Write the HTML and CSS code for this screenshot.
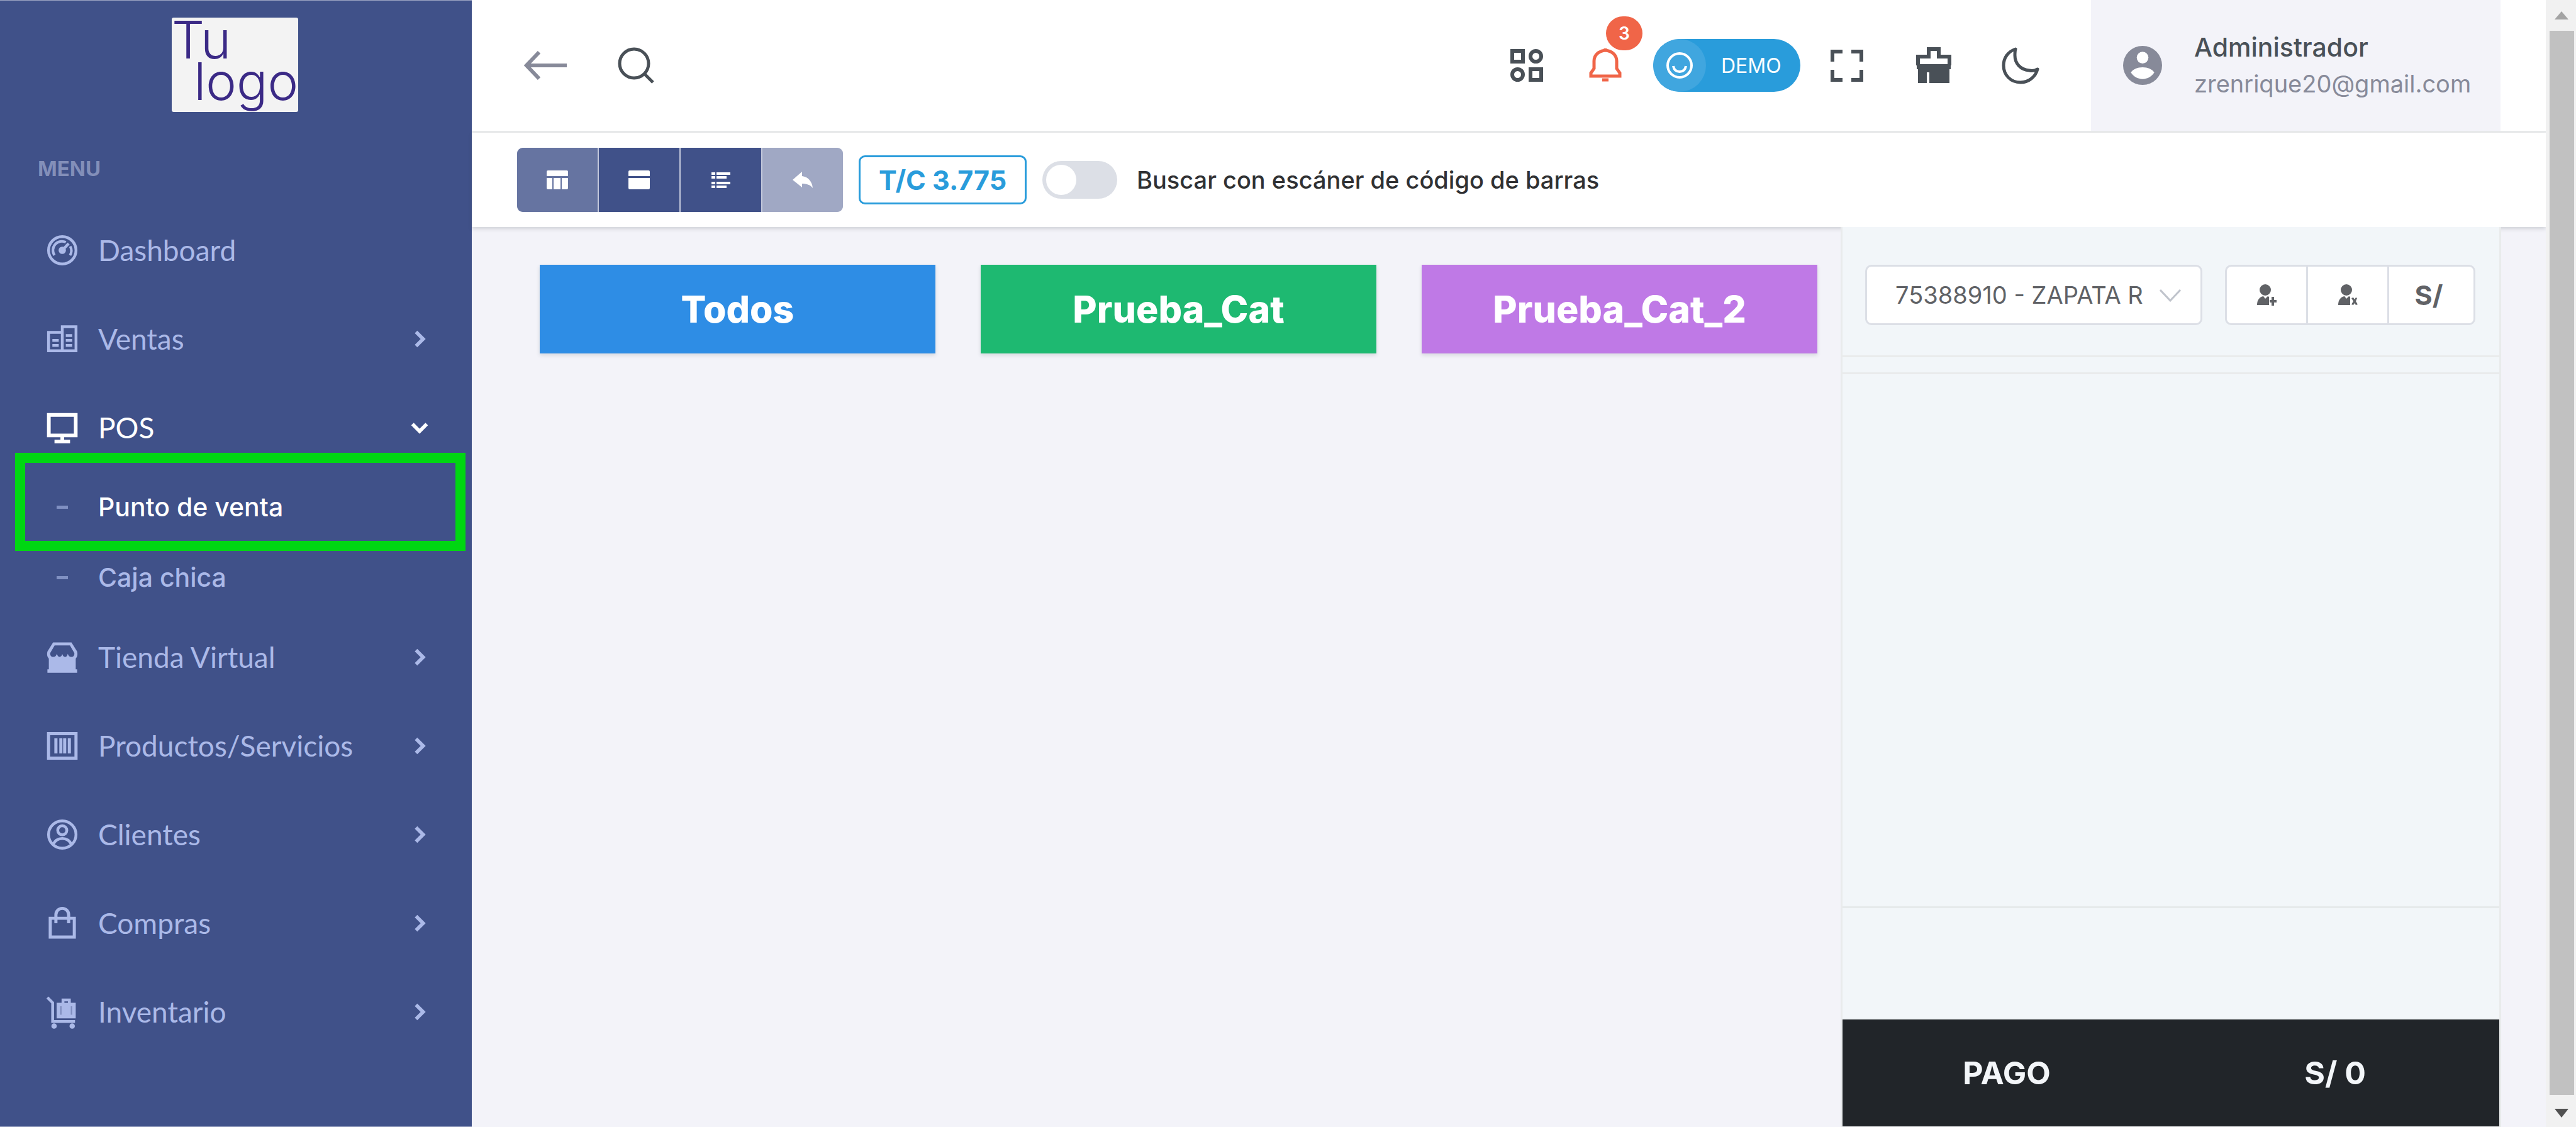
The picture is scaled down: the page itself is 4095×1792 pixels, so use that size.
FILE: index.html
```html
<!DOCTYPE html>
<html lang="es">
<head>
<meta charset="utf-8">
<meta name="viewport" content="width=device-width, initial-scale=1">
<title>Punto de venta</title>
<link rel="stylesheet" href="styles.css">
</head>
<body>
<div class="app">
  <aside class="sidebar">
    <a class="logo" href="#"><span>Tu</span><span class="logo-end">logo</span></a>
    <p class="menu-title">MENU</p>
    <nav>
      <ul class="menu">
        <li><a class="menu-link" href="#">
          <svg class="menu-icon" viewBox="0 0 24 24" fill="none" stroke="currentColor" stroke-width="2"><circle cx="12" cy="12" r="9.700"/><path d="M6.500 15.500A6.300 6.300 0 0 1 14.500 6.300M17.600 9.200A6.300 6.300 0 0 1 17.500 15.500" stroke-width="1.800"/><path d="M12 12l4.500-4.800"/><circle cx="12" cy="12" r="1.600" fill="currentColor"/></svg>
          <span>Dashboard</span></a></li>
        <li><a class="menu-link" href="#">
          <svg class="menu-icon" viewBox="0 0 24 24" fill="none" stroke="currentColor" stroke-width="2"><path d="M2.300 7.300H12V20.300H2.300zM12 3.300h9.700v17H12zM5 13h4.500M5 16.500h4.500M14.500 9.500H19M14.500 13H19M14.500 16.500H19"/></svg>
          <span>Ventas</span>
          <svg class="chevron" viewBox="0 0 24 24"><path d="M8 4l8 8-8 8"/></svg></a></li>
        <li>
          <a class="menu-link active" href="#">
          <svg class="menu-icon" viewBox="0 0 24 24" fill="none" stroke="currentColor" stroke-width="2.600"><path d="M2.500 3h19v14.500h-19z"/><path d="M12 18v3M6.500 21.800h11"/></svg>
          <span>POS</span>
          <svg class="chevron" viewBox="0 0 24 24"><path d="M4 8l8 8 8-8"/></svg></a>
          <ul class="submenu">
            <li class="marked"><a class="sub-link active" href="#">Punto de venta</a></li>
            <li><a class="sub-link" href="#">Caja chica</a></li>
          </ul>
        </li>
        <li><a class="menu-link" href="#">
          <svg class="menu-icon" viewBox="0 0 24 24" fill="currentColor"><path fill-rule="evenodd" d="M5.500 1.500h13L22.500 8c.6 2.500-.1 4-1 5v7.500h1V23h-21v-2.500h1V13c-.9-1-1.600-2.500-1-5zM6.600 3.700L3.500 9c-.2 1.200.3 2.500 1.700 2.800 1.700.2 2.500-.8 3-2.300.6 3 3.300 3 3.800.2.600 2.900 3.300 2.800 3.900-.2.400 1.500 1.300 2.500 2.900 2.300 1.500-.3 1.900-1.600 1.700-2.800l-3.100-5.300z"/></svg>
          <span>Tienda Virtual</span>
          <svg class="chevron" viewBox="0 0 24 24"><path d="M8 4l8 8-8 8"/></svg></a></li>
        <li><a class="menu-link" href="#">
          <svg class="menu-icon" viewBox="0 0 24 24" fill="none" stroke="currentColor" stroke-width="2.200"><path d="M2.300 3.300h19.400v17.400H2.300z"/><path d="M7.500 6.700v10.600M11 6.700v10.600M13.700 6.700v10.600M17 6.700v10.600"/></svg>
          <span>Productos/Servicios</span>
          <svg class="chevron" viewBox="0 0 24 24"><path d="M8 4l8 8-8 8"/></svg></a></li>
        <li><a class="menu-link" href="#">
          <svg class="menu-icon" viewBox="0 0 24 24" fill="none" stroke="currentColor" stroke-width="2"><circle cx="12" cy="12" r="9.700"/><circle cx="12" cy="9" r="3.200"/><path d="M5.500 19c1.500-3 3.500-4.200 6.500-4.200s5 1.200 6.500 4.200"/></svg>
          <span>Clientes</span>
          <svg class="chevron" viewBox="0 0 24 24"><path d="M8 4l8 8-8 8"/></svg></a></li>
        <li><a class="menu-link" href="#">
          <svg class="menu-icon" viewBox="0 0 24 24" fill="none" stroke="currentColor" stroke-width="2.200"><path d="M3.500 8.500h17v13.300h-17z"/><path d="M7.500 12V6a4.500 4.500 0 0 1 9 0v6"/></svg>
          <span>Compras</span>
          <svg class="chevron" viewBox="0 0 24 24"><path d="M8 4l8 8-8 8"/></svg></a></li>
        <li><a class="menu-link" href="#">
          <svg class="menu-icon" viewBox="0 0 24 24" fill="none" stroke="currentColor" stroke-width="2"><path d="M1.500 1.800L5.200 5.500v13.300H21"/><path fill="currentColor" d="M9 6.500h11.500v9H9z"/><path d="M12.500 6V3.500h4.500V6"/><path stroke="#7f8dbe" stroke-width="1" d="M11 8v6M18.500 8v6"/><g fill="currentColor" stroke="none"><circle cx="6.200" cy="22" r="1.900"/><circle cx="19" cy="22" r="1.900"/></g></svg>
          <span>Inventario</span>
          <svg class="chevron" viewBox="0 0 24 24"><path d="M8 4l8 8-8 8"/></svg></a></li>
      </ul>
    </nav>
  </aside>

  <div class="page">
    <header class="topbar">
      <button class="icon-btn muted" aria-label="Volver"><svg class="arrow" viewBox="0 0 68 46" fill="none" stroke="currentColor" stroke-width="6"><path d="M68 23H4M24 2L4 23l20 21"/></svg></button>
      <button class="icon-btn search" aria-label="Buscar"><svg class="top-icon" viewBox="0 0 60 60" fill="none" stroke="currentColor" stroke-width="5"><circle cx="27" cy="27" r="23"/><path d="M43 43l14 14"/></svg></button>
      <div class="actions">
        <button class="icon-btn" aria-label="Aplicaciones"><svg class="top-icon" viewBox="0 0 60 60" fill="none" stroke="currentColor" stroke-width="6"><path d="M7 7h17v17H7zM36 36h17v17H36z"/><circle cx="44.500" cy="15.500" r="8.500"/><circle cx="15.500" cy="44.500" r="8.500"/></svg></button>
        <button class="icon-btn bell" aria-label="Notificaciones"><svg class="top-icon" viewBox="0 0 60 60" fill="none" stroke="currentColor" stroke-width="5"><path d="M7 47V42l5-7V23C12 13 20 7 30 6c10 1 18 7 18 17v12l5 7v5zM30 6V3M25 53h10"/></svg><span class="count">3</span></button>
        <button class="demo"><span class="demo-icon"><svg viewBox="0 0 44 44" fill="none" stroke="currentColor" stroke-width="4"><circle cx="22" cy="22" r="19"/><path d="M12 23c1 6 5 9 10 9s9-3 10-9"/></svg></span><span class="demo-text">DEMO</span></button>
        <button class="icon-btn" aria-label="Pantalla completa"><svg class="top-icon" viewBox="0 0 60 60" fill="none" stroke="currentColor" stroke-width="6"><path d="M7 24V8h16M37 8h16v16M53 37v16H37M23 53H7V37"/></svg></button>
        <button class="icon-btn" aria-label="Tema"><svg class="top-icon" viewBox="0 0 60 60"><path fill="none" stroke="currentColor" stroke-width="6" d="M5 30V16h17V4h16v12h17v14"/><path fill="currentColor" d="M3 28h54v8h-2v22H23V41h-4v17H5V36H3z"/></svg></button>
        <button class="icon-btn" aria-label="Modo oscuro"><svg class="top-icon" viewBox="0 0 60 60" fill="none" stroke="currentColor" stroke-width="5" stroke-linejoin="round"><path d="M22 4C10 8 3 18 3 30c0 15 11 27 27 27 13 0 24-9 27-21-5 3-9 3-13 2C30 37 21 27 21 14c0-4 0-7 1-10z"/></svg></button>
      </div>
      <a class="user" href="#">
        <svg class="user-icon" viewBox="0 0 60 60"><circle cx="30" cy="30" r="30" fill="#878a99"/><circle cx="30" cy="18" r="9" fill="#fff"/><path fill="#fff" d="M12 41c3-5 10-8 18-8s15 3 18 8c-4 6-10 10-18 10s-14-4-18-10z"/></svg>
        <span class="user-text"><span class="user-name">Administrador</span><span class="user-mail">zrenrique20@gmail.com</span></span>
      </a>
    </header>

    <div class="toolbar">
      <div class="tools">
        <button class="tool current" aria-label="Tabla"><svg viewBox="0 0 36 32" fill="#fff"><path d="M1 3q0-2 2-2h30q2 0 2 2v7H1zM1 13h9v18H3q-2 0-2-2zM12 13h11v18H12zM25 13h10v16q0 2-2 2h-8z"/></svg></button>
        <button class="tool" aria-label="Tarjeta"><svg viewBox="0 0 36 32" fill="#fff"><path d="M1 3q0-2 2-2h30q2 0 2 2v7H1zM1 13h34v16q0 2-2 2H3q-2 0-2-2z"/></svg></button>
        <button class="tool" aria-label="Lista"><svg viewBox="0 0 36 32" fill="#fff"><path d="M3 4h6v4H3zM11 4h22v4H11zM3 10h6v4H3zM11 10h16v4H11zM3 19h6v4H3zM11 19h22v4H11zM3 25h6v4H3zM11 25h16v4H11z"/></svg></button>
        <button class="tool faded" aria-label="Regresar" disabled><svg viewBox="0 0 36 32" fill="#fff"><path d="M17 3v7c9 1 16 8 17 19-4-5-9-7-17-7v6L2 16z"/></svg></button>
      </div>
      <span class="rate">T/C 3.775</span>
      <input class="switch" type="checkbox" role="switch" id="scanner">
      <label class="switch-label" for="scanner">Buscar con escáner de código de barras</label>
    </div>

    <main class="content">
      <section class="categories">
        <button class="category blue">Todos</button>
        <button class="category green">Prueba_Cat</button>
        <button class="category purple">Prueba_Cat_2</button>
      </section>
      <section class="cart">
        <div class="customer">
          <div class="picker">
            <select aria-label="Cliente"><option>75388910 - ZAPATA R</option></select>
            <svg viewBox="0 0 34 20" fill="none" stroke="#c0c4cc" stroke-width="3"><path d="M1 1l16 17L33 1"/></svg>
          </div>
          <div class="customer-actions">
            <button aria-label="Agregar cliente"><svg viewBox="0 0 32 34" fill="currentColor"><ellipse cx="14" cy="9" rx="9" ry="9"/><path d="M1 33c0-8 4-13 10-14l3 4 4-4 2 1v13z"/><path d="M24 20h4v5h4v4h-4v5h-4v-5h-3v-4h3z"/></svg></button>
            <button aria-label="Quitar cliente"><svg viewBox="0 0 32 34" fill="currentColor"><ellipse cx="14" cy="9" rx="9" ry="9"/><path d="M1 33c0-8 4-13 10-14l3 4 4-4 2 1v13z"/><path d="M22 22l3-1 2 3 2-3 2 1-2 5 3 5-3 1-2-3-2 3-3-1 3-5z"/></svg></button>
            <button class="currency">S/</button>
          </div>
        </div>
        <div class="strip"></div>
        <div class="items"></div>
        <div class="totals"></div>
        <button class="pay"><span>PAGO</span><span>S/ 0</span></button>
      </section>
    </main>
  </div>

  <div class="scroll" aria-hidden="true">
    <svg viewBox="0 0 48 49"><path fill="#a3a3a3" d="M14 31l11-13 11 13z"/></svg>
    <div class="thumb"></div>
    <svg viewBox="0 0 48 49"><path fill="#505050" d="M14 20l11 14 11-14z"/></svg>
  </div>
</div>
</body>
</html>
```
FILE: styles.css
```css
* { box-sizing: border-box; }
body { margin: 0; background: #f3f3f9; color: #495057; font-family: Inter, "Open Sans", sans-serif; }
ul { list-style: none; margin: 0; padding: 0; }
a { color: inherit; text-decoration: none; }
button, select { font: inherit; color: inherit; margin: 0; padding: 0; border: 0; background: none; border-radius: 0; }
svg { display: block; flex: none; }

.app { display: grid; grid-template-columns: 750px 1fr 48px; min-height: 100vh; }

/* Sidebar */
.sidebar { background: #405189; color: #abb9e8; border-top: 1px solid #9ea6c4; border-bottom: 1px solid #9ea6c4; }
.logo { display: flex; flex-direction: column; width: 201px; height: 150px; margin: 27px 0 0 273px; background: #f3f3f3; border-radius: 3px; color: #3b2a86; font-size: 82px; font-weight: 300; line-height: 66px; padding: 3px 0 0; }
.logo-end { align-self: flex-end; }
.menu-title { margin: 65px 0 34px; padding-left: 60px; font-size: 33px; line-height: 50px; font-weight: 700; color: #838fb9; }
.menu { font-family: Lato, "Open Sans", sans-serif; font-size: 46px; }
.menu-link { display: flex; align-items: center; height: 141px; padding: 0 66px 0 72px; gap: 30px; }
.menu-icon { width: 54px; height: 54px; }
.chevron { width: 34px; height: 34px; margin-left: auto; fill: none; stroke: currentColor; stroke-width: 4; }
.active { color: #fff; }
.submenu { font-family: Inter, "Open Sans", sans-serif; font-size: 41px; }
.submenu li { position: relative; }
.sub-link { display: flex; align-items: center; gap: 48px; height: 112px; padding-left: 90px; font-weight: 500; }
.sub-link::before { content: ""; width: 18px; height: 5px; background: #8090c2; }
.marked::after { content: ""; position: absolute; top: -30px; right: 10px; bottom: -14px; left: 24px; border: 16px solid #00d612; pointer-events: none; }

/* Page header */
.page { display: flex; flex-direction: column; min-width: 0; }
.topbar { display: flex; align-items: center; height: 211px; padding: 0 72px 0 83px; background: #fff; border-bottom: 3px solid #e9ebec; }
.icon-btn { position: relative; flex: none; }
.muted { color: #878a99; }
.arrow { width: 68px; height: 46px; }
.top-icon { width: 60px; height: 60px; }
.search { margin-left: 80px; }
.actions { display: flex; align-items: center; margin-left: auto; margin-right: 82px; gap: 78px; }
.bell { color: #f06548; margin: 0 -32px 0 -13px; }
.count { position: absolute; top: -48px; left: 31px; width: 58px; height: 54px; border-radius: 27px; background: #f06548; color: #fff; font-size: 28px; font-weight: 600; line-height: 54px; text-align: center; }
.demo { display: flex; align-items: center; width: 234px; height: 84px; margin-right: -34px; border-radius: 42px; background: #299cdb; color: #fff; overflow: hidden; }
.demo-icon { display: flex; align-items: center; justify-content: center; width: 84px; height: 84px; border-radius: 42px; background: #40a6df; }
.demo-icon svg { width: 44px; height: 44px; }
.demo-text { margin-left: 24px; font-size: 32px; }
.user { display: flex; align-items: center; align-self: stretch; width: 651px; padding-left: 51px; gap: 51px; background: #f3f3f9; }
.user-icon { width: 62px; height: 62px; }
.user-text { display: flex; flex-direction: column; line-height: 58px; }
.user-name { font-size: 41px; font-weight: 500; }
.user-mail { font-size: 38px; color: #878a99; }

/* Toolbar */
.toolbar { display: flex; align-items: center; height: 150px; padding-left: 72px; background: #fff; box-shadow: 0 3px 6px rgba(56, 65, 74, .18); }
.tools { display: flex; gap: 2px; border-radius: 9px; overflow: hidden; background: #c3c8dc; }
.tool { display: flex; align-items: center; justify-content: center; width: 128px; height: 102px; background: #405189; }
.tool svg { width: 36px; height: 32px; }
.tool.current { background: #6674a1; }
.tool.faded { background: #a0a8c4; }
.rate { margin-left: 25px; width: 267px; height: 78px; border: 3px solid #299cdb; border-radius: 10px; color: #299cdb; font-size: 43px; font-weight: 700; line-height: 72px; text-align: center; }
.switch { appearance: none; position: relative; margin: 0 0 0 25px; width: 119px; height: 60px; border-radius: 30px; background: #dcdfe6; }
.switch::after { content: ""; position: absolute; top: 6px; left: 6px; width: 48px; height: 48px; border-radius: 50%; background: #fff; }
.switch-label { margin-left: 31px; font-size: 38px; font-weight: 500; color: #303133; }

/* Point of sale */
.content { display: flex; flex: 1; gap: 37px; padding: 0 71px 0 108px; }
.categories { flex: 1; display: grid; grid-template-columns: repeat(3, 1fr); align-content: start; gap: 72px; padding-top: 60px; }
.category { height: 141px; color: #fff; font-size: 59px; font-weight: 800; box-shadow: 0 3px 6px rgba(56, 65, 74, .15); }
.blue { background: #2e8de5; }
.green { background: #1eb971; }
.purple { background: #bf79e6; }

.cart { display: flex; flex-direction: column; width: 1050px; border: solid #e9ebec; border-width: 0 3px 1px; background: #f2f6f9; }
.customer { display: flex; gap: 36px; padding: 60px 38px 48px 36px; border-bottom: 3px solid #e9ebec; color: #606266; }
.picker { position: relative; flex: 1; }
.picker select { appearance: none; width: 100%; height: 96px; padding: 0 42px 0 45px; border: 3px solid #dcdfe6; border-radius: 10px; background: #fff; font-size: 38px; }
.picker svg { position: absolute; right: 34px; top: 39px; width: 34px; height: 20px; }
.customer-actions { display: flex; gap: 3px; width: 398px; height: 96px; border: 3px solid #dcdfe6; border-radius: 10px; background: #dcdfe6; overflow: hidden; }
.customer-actions button { display: flex; align-items: center; justify-content: center; flex: 1; background: #fff; }
.customer-actions .currency { flex: none; width: 134px; padding-right: 8px; font-size: 43px; font-weight: 700; }
.customer-actions svg { width: 32px; height: 34px; }
.strip { height: 27px; border-bottom: 3px solid #e9ebec; }
.items { flex: 1; border-bottom: 3px solid #e6eaeb; }
.totals { height: 177px; }
.pay { display: grid; grid-template-columns: 1fr 1fr; align-items: center; height: 170px; background: #212529; color: #f3f6f9; font-size: 50px; font-weight: 700; text-align: center; }

/* Scrollbar */
.scroll { display: flex; flex-direction: column; background: #f1f1f1; }
.scroll svg { width: 48px; height: 49px; }
.thumb { flex: 1; margin: 0 3px 2px 6px; background: #c1c1c1; }
```
